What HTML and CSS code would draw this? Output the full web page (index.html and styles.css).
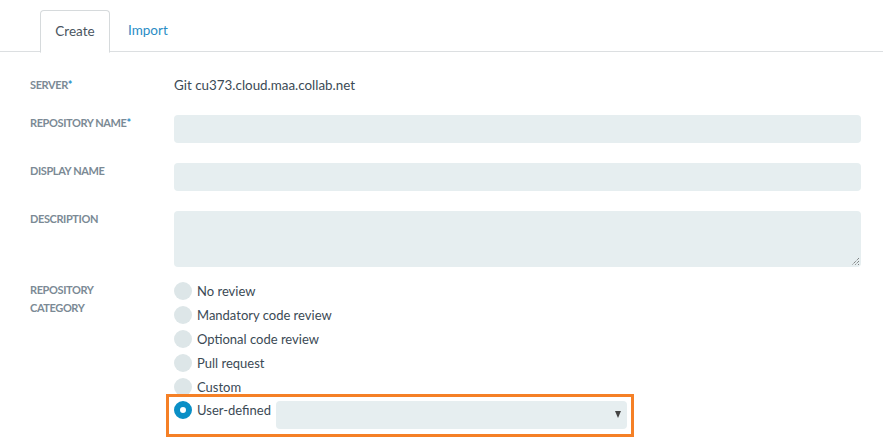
FILE: index.html
```html
<!DOCTYPE html>
<html>
<head>
<meta charset="utf-8">
<link rel="stylesheet" href="styles.css">
</head>
<body>
<div class="tabs">
  <div class="tab active">Create</div>
  <div class="tab">Import</div>
</div>
<div class="form">
  <div class="row row-server">
    <div class="label">SERVER<span class="req">*</span></div>
    <div class="value">Git cu373.cloud.maa.collab.net</div>
  </div>
  <div class="row">
    <div class="label">REPOSITORY NAME<span class="req">*</span></div>
    <div class="field"><div class="input"></div></div>
  </div>
  <div class="row">
    <div class="label">DISPLAY NAME</div>
    <div class="field"><div class="input"></div></div>
  </div>
  <div class="row">
    <div class="label">DESCRIPTION</div>
    <div class="field"><div class="textarea">
      <svg class="grip" width="9" height="9" viewBox="0 0 9 9"><path d="M8 1 L1 8 M8 4 L4 8 M8 7 L7 8" stroke="#555" stroke-width="1" stroke-dasharray="1 1"/></svg>
    </div></div>
  </div>
  <div class="row row-cat">
    <div class="label label-cat">REPOSITORY<br>CATEGORY</div>
    <div class="radios">
      <div class="radio"><span class="dot"></span><span class="rtext">No review</span></div>
      <div class="radio"><span class="dot"></span><span class="rtext">Mandatory code review</span></div>
      <div class="radio"><span class="dot"></span><span class="rtext">Optional code review</span></div>
      <div class="radio"><span class="dot"></span><span class="rtext">Pull request</span></div>
      <div class="radio"><span class="dot"></span><span class="rtext">Custom</span></div>
      <div class="userdef">
        <div class="radio"><span class="dot checked"></span><span class="rtext">User-defined</span></div>
        <div class="select"><span class="arrow"></span></div>
      </div>
    </div>
  </div>
</div>
</body>
</html>
```
FILE: styles.css
```css
body {
  margin: 0;
  font-family: "Lato", "Open Sans", sans-serif;
  color: #3b4a55;
  background: #fff;
}
.tabs {
  display: flex;
  padding: 10px 0 0 40px;
  border-bottom: 1px solid #dcdfe1;
  height: 41px;
  box-sizing: content-box;
}
.tab {
  height: 41px;
  line-height: 40px;
  font-size: 13.5px;
  padding: 0 18px;
  color: #2a8dc5;
}
.tab.active {
  color: #4a5560;
  border: 1px solid #d6dadc;
  border-bottom: 1px solid #fff;
  border-radius: 4px 4px 0 0;
  background: #fff;
  width: 68px;
  padding: 0;
  text-align: center;
  height: 41px;
}
.form {
  padding: 23px 22px 0 30px;
}
.row {
  display: grid;
  grid-template-columns: 144px 1fr;
  margin-bottom: 20px;
}
.row-server {
  height: 20px;
  align-items: center;
}
.label {
  font-size: 11px;
  font-weight: bold;
  letter-spacing: -0.4px;
  color: #7b8a95;
  padding-top: 1px;
  line-height: 14px;
}
.row-server .label { padding-top: 0; }
.req { color: #2a8dc5; }
.value {
  font-size: 13.4px;
  color: #3b4a55;
}
.input {
  height: 28px;
  background: #e6eef0;
  border-radius: 4px;
}
.textarea {
  height: 56px;
  background: #e6eef0;
  border-radius: 4px;
  position: relative;
}
.grip {
  position: absolute;
  right: 1px;
  bottom: 1px;
}
.row-cat { margin-top: -8px; }
.label-cat {
  line-height: 18px;
  padding-top: 2px;
}
.radios {
  display: flex;
  flex-direction: column;
}
.radio {
  display: flex;
  align-items: center;
  height: 24px;
  font-size: 13px;
}
.dot {
  width: 18px;
  height: 18px;
  border-radius: 50%;
  background: #dde6e8;
  margin-right: 5px;
  box-sizing: border-box;
}
.dot.checked {
  background: #fff;
  border: 6px solid #0a8fc6;
}
.userdef {
  display: flex;
  align-items: flex-start;
  width: 468px;
  margin-left: -8px;
  padding: 2px 4px 0 5px;
  border: 3px solid #f58026;
  box-sizing: border-box;
  height: 43px;
  margin-top: -5px;
}
.userdef .radio {
  height: 22px;
}
.select {
  margin-left: 5px;
  flex: 1;
  height: 28px;
  margin-top: 2px;
  background: #e6eef0;
  border-radius: 4px;
  position: relative;
}
.arrow {
  position: absolute;
  right: 6px;
  top: 10px;
  width: 0;
  height: 0;
  border-left: 3.5px solid transparent;
  border-right: 3.5px solid transparent;
  border-top: 7px solid #444;
}
```
